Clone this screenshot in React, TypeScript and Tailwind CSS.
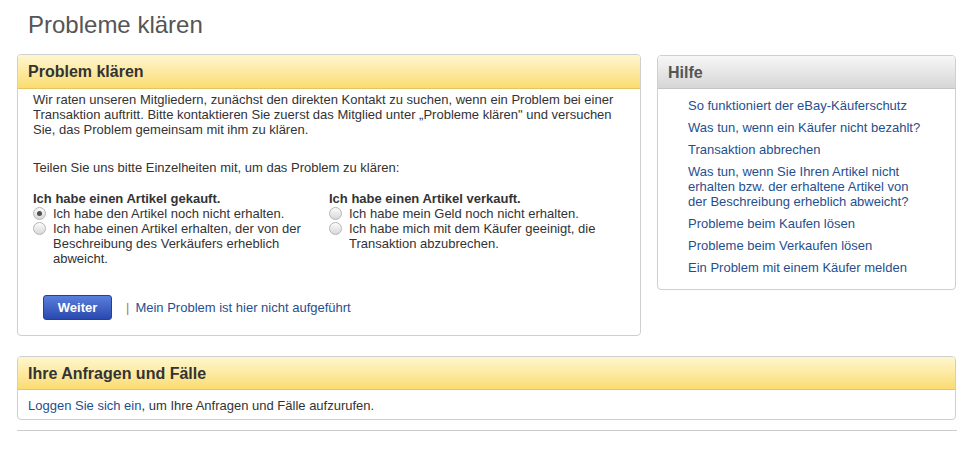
export default function App() {
  const font = { fontFamily: '"Liberation Sans", Arial, sans-serif' };
  const helpLinks: string[][] = [
    ["So funktioniert der eBay-Käuferschutz"],
    ["Was tun, wenn ein Käufer nicht bezahlt?"],
    ["Transaktion abbrechen"],
    [
      "Was tun, wenn Sie Ihren Artikel nicht",
      "erhalten bzw. der erhaltene Artikel von",
      "der Beschreibung erheblich abweicht?",
    ],
    ["Probleme beim Kaufen lösen"],
    ["Probleme beim Verkaufen lösen"],
    ["Ein Problem mit einem Käufer melden"],
  ];

  const Radio = ({ checked, label }: { checked?: boolean; label: string }) => (
    <label className="flex items-start gap-[7px]">
      <span className="mt-[1px] w-[13px] h-[13px] shrink-0 rounded-full border border-[#b5b5b5] bg-gradient-to-b from-[#fbfbfb] to-[#d8d8d8] flex items-center justify-center">
        {checked && <span className="w-[5px] h-[5px] rounded-full bg-[#505050]" />}
      </span>
      <span>{label}</span>
    </label>
  );

  return (
    <div className="w-[974px] h-[460px] bg-white text-[13px] leading-[15px] text-[#333]" style={font}>
      <div className="px-[17px] pt-[10px]">
        <h1 className="text-[24px] leading-[30px] text-[#555] pl-[11px]">Probleme klären</h1>

        <div className="flex gap-[16px] mt-[14px] items-start">
          {/* Problem klären */}
          <div className="w-[624px] rounded-[4px] border border-[#cfcfcf] overflow-hidden">
            <div className="h-[34px] flex items-center px-[10px] bg-gradient-to-b from-[#fef6cf] to-[#fbdc6f] border-b border-[#e3c466]">
              <h2 className="text-[16px] font-bold text-[#333]">Problem klären</h2>
            </div>
            <div className="px-[15px] pt-[3px] pb-[15px]">
              <p>
                Wir raten unseren Mitgliedern, zunächst den direkten Kontakt zu suchen, wenn ein Problem bei einer
                Transaktion auftritt. Bitte kontaktieren Sie zuerst das Mitglied unter „Probleme klären" und versuchen
                Sie, das Problem gemeinsam mit ihm zu klären.
              </p>
              <p className="mt-[23px]">Teilen Sie uns bitte Einzelheiten mit, um das Problem zu klären:</p>
              <div className="flex mt-[16px]">
                <div className="w-[296px] pr-[10px]">
                  <div className="font-bold">Ich habe einen Artikel gekauft.</div>
                  <Radio checked label="Ich habe den Artikel noch nicht erhalten." />
                  <Radio label="Ich habe einen Artikel erhalten, der von der Beschreibung des Verkäufers erheblich abweicht." />
                </div>
                <div className="w-[290px]">
                  <div className="font-bold">Ich habe einen Artikel verkauft.</div>
                  <Radio label="Ich habe mein Geld noch nicht erhalten." />
                  <Radio label="Ich habe mich mit dem Käufer geeinigt, die Transaktion abzubrechen." />
                </div>
              </div>
              <div className="flex items-center mt-[29px] pl-[10px]">
                <button className="w-[69px] h-[25px] rounded-[3px] border border-[#23419a] bg-gradient-to-b from-[#5a7fdc] to-[#2a48b0] text-white font-bold text-[13px]">
                  Weiter
                </button>
                <span className="ml-[14px] text-[#b5773c]">|</span>
                <a href="#" className="ml-[6px] text-[#1f4f8f]">Mein Problem ist hier nicht aufgeführt</a>
              </div>
            </div>
          </div>

          {/* Hilfe */}
          <div className="w-[299px] rounded-[4px] border border-[#cfcfcf] overflow-hidden mt-[1px]">
            <div className="h-[33px] flex items-center px-[10px] bg-gradient-to-b from-[#f7f7f7] to-[#d6d6d6] border-b border-[#c4c4c4]">
              <h2 className="text-[16px] font-bold text-[#555]">Hilfe</h2>
            </div>
            <ul className="pl-[30px] pr-[20px] pt-[9px] pb-[14px] flex flex-col gap-[7px]">
              {helpLinks.map((lines) => (
                <li key={lines[0]}>
                  <a href="#" className="text-[#1f4f8f]">
                    {lines.map((line, i) => (
                      <span key={i} className="block">{line}</span>
                    ))}
                  </a>
                </li>
              ))}
            </ul>
          </div>
        </div>

        {/* Ihre Anfragen und Fälle */}
        <div className="w-[939px] mt-[20px] rounded-[4px] border border-[#cfcfcf] overflow-hidden">
          <div className="h-[33px] flex items-center px-[10px] bg-gradient-to-b from-[#fef6cf] to-[#fbdc6f] border-b border-[#e3c466]">
            <h2 className="text-[16px] font-bold text-[#333]">Ihre Anfragen und Fälle</h2>
          </div>
          <div className="px-[10px] pt-[8px] pb-[6px]">
            <a href="#" className="text-[#1f4f8f]">Loggen Sie sich ein</a>, um Ihre Anfragen und Fälle aufzurufen.
          </div>
        </div>

        <div className="w-[940px] mt-[10px] border-t border-[#cccccc]" />
      </div>
    </div>
  );
}
